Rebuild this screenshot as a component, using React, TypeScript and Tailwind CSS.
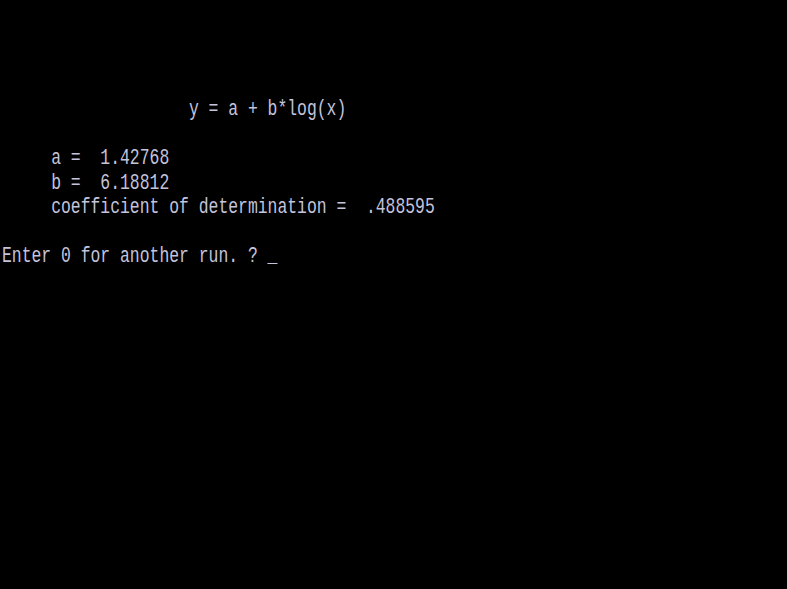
const LINES: string[] = [
  "",
  "",
  "",
  "",
  "                   y = a + b*log(x)",
  "",
  "     a =  1.42768",
  "     b =  6.18812",
  "     coefficient of determination =  .488595",
  "",
  "Enter 0 for another run. ? _",
];

export default function App() {
  return (
    <div className="h-[589px] w-[787px] overflow-hidden bg-black pl-[2px] font-['Liberation_Mono',monospace] text-[16.4px] text-[#c4c4dc]">
      {LINES.map((line, i) => (
        <div key={i} className="h-[24.5px] whitespace-pre leading-[24.5px]">
          <span className="inline-block origin-center scale-y-[1.3]">{line}</span>
        </div>
      ))}
    </div>
  );
}
